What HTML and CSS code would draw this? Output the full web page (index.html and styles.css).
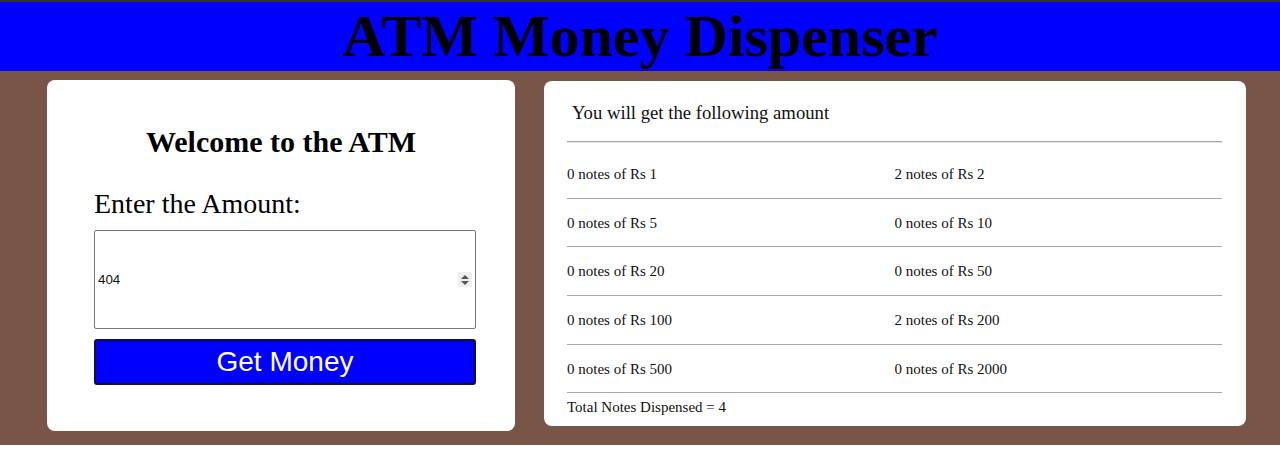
FILE: index.html
```html
<!DOCTYPE html>
<html>
<head>
<meta charset="utf-8">
<title>ATM Money Dispenser</title>
<link rel="stylesheet" href="styles.css">
</head>
<body>
<header class="topbar">
  <h1 class="title">ATM Money Dispenser</h1>
</header>
<main class="stage">
  <section class="card card-input">
    <h2 class="welcome">Welcome to the ATM</h2>
    <div class="form">
      <label class="amount-label" for="amount">Enter the Amount:</label>
      <div class="field">
        <input id="amount" class="amount-input" type="text" value="404">
        <span class="spinner"><span class="tri-up"></span><span class="tri-down"></span></span>
      </div>
      <button class="get-btn" type="button">Get Money</button>
    </div>
  </section>
  <section class="card card-result">
    <p class="result-head">You will get the following amount</p>
    <hr class="rule">
    <table class="notes">
      <tr><td>0 notes of Rs 1</td><td>2 notes of Rs 2</td></tr>
      <tr><td>0 notes of Rs 5</td><td>0 notes of Rs 10</td></tr>
      <tr><td>0 notes of Rs 20</td><td>0 notes of Rs 50</td></tr>
      <tr><td>0 notes of Rs 100</td><td>2 notes of Rs 200</td></tr>
      <tr><td>0 notes of Rs 500</td><td>0 notes of Rs 2000</td></tr>
    </table>
    <div class="total">Total Notes Dispensed = 4</div>
  </section>
</main>
</body>
</html>
```

FILE: styles.css
```css
html, body {
  margin: 0;
  padding: 0;
  background: #ffffff;
  font-family: "Liberation Serif", "Times New Roman", serif;
  color: #000;
}

.topbar {
  background: #0000ff;
  border-top: 2px solid #333333;
}

.title {
  margin: 0;
  font-size: 60px;
  line-height: 69px;
  font-weight: bold;
  text-align: center;
  color: #000;
}

.stage {
  background: #795548;
  height: 374px;
  box-sizing: border-box;
  padding: 9px 0 0 47px;
  display: flex;
  align-items: flex-start;
  gap: 29px;
}

.card {
  background: #ffffff;
  border-radius: 8px;
  box-sizing: border-box;
}

.card-input {
  width: 468px;
  height: 351px;
  padding-top: 45px;
}

.welcome {
  margin: 0;
  font-size: 30px;
  line-height: 34px;
  font-weight: bold;
  text-align: center;
}

.form {
  margin: 29px 0 0 47px;
  width: 382px;
  display: flex;
  flex-direction: column;
}

.amount-label {
  font-size: 28px;
  line-height: 32px;
}

.field {
  position: relative;
  margin-top: 10px;
}

.amount-input {
  display: block;
  width: 382px;
  height: 99px;
  box-sizing: border-box;
  border: 1px solid #767676;
  border-radius: 2px;
  padding: 1px 3px;
  font-family: "Liberation Sans", Arial, sans-serif;
  font-size: 13.33px;
  color: #111;
  background: #fff;
}

.spinner {
  position: absolute;
  right: 4px;
  top: 42px;
  width: 14px;
  height: 15px;
  background: #efefef;
  display: flex;
  flex-direction: column;
  align-items: center;
  justify-content: center;
  gap: 2px;
}

.tri-up {
  width: 0;
  height: 0;
  border-left: 4px solid transparent;
  border-right: 4px solid transparent;
  border-bottom: 4px solid #555;
}

.tri-down {
  width: 0;
  height: 0;
  border-left: 4px solid transparent;
  border-right: 4px solid transparent;
  border-top: 4px solid #555;
}

.get-btn {
  margin-top: 10px;
  width: 382px;
  height: 46px;
  background: #0000ff;
  color: #ffffff;
  border: 2px solid #111133;
  border-radius: 3px;
  font-family: "Liberation Sans", Arial, sans-serif;
  font-size: 28px;
  padding: 0;
}

.card-result {
  width: 702px;
  margin-top: 1px;
  padding: 21px 24px 10px 23px;
}

.result-head {
  margin: 0 0 18px 5px;
  font-size: 18.7px;
  line-height: 21px;
  color: #111;
}

.rule {
  margin: 0 0 7px 0;
  border: 0;
  border-top: 1px solid #a8a8a8;
  border-bottom: 1px solid #e4e4e4;
  height: 0;
}

.notes {
  width: 100%;
  border-collapse: collapse;
  table-layout: fixed;
  font-size: 15px;
  color: #111;
}

.notes td {
  padding: 16px 0 14.7px;
  line-height: 17px;
  border-bottom: 1px solid #a8a8a8;
}

.total {
  padding-top: 6px;
  font-size: 15px;
  line-height: 17px;
  color: #111;
}
```
